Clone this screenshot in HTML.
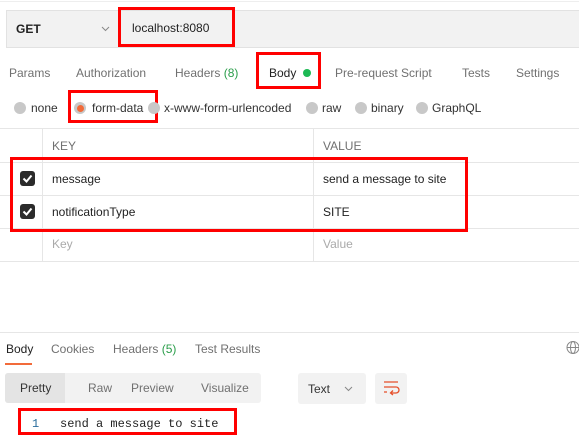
<!DOCTYPE html>
<html><head><style>
body{margin:0;width:579px;height:442px;background:#fff;font-family:"Liberation Sans",sans-serif;font-size:12px;color:#333;position:relative;overflow:hidden}
.a{position:absolute;white-space:nowrap}
.red{position:absolute;border:3px solid #f00;box-sizing:border-box}
.g{color:#707070}
.rad{position:absolute;width:12px;height:12px;border-radius:50%;background:#c8c8c8;top:102px}
.hl{position:absolute;height:1px;background:#e6e6e6;left:0;width:579px}
.vl{position:absolute;width:1px;background:#e6e6e6}
.cb{position:absolute;left:20px;width:15px;height:15px;background:#2b2b2b;border-radius:3px}
</style></head><body>
<div class="hl" style="top:1px;background:#eee"></div>
<div class="a" style="left:6px;top:10px;width:573px;height:38px;background:#f2f2f2;border:1px solid #e2e2e2;border-right:none;box-sizing:border-box"></div>
<div class="a" style="left:16px;top:22px;font-weight:bold;font-size:12px;color:#222">GET</div>
<svg class="a" style="left:101px;top:26px" width="9" height="6"><path d="M1 1l3.5 3.5L8 1" fill="none" stroke="#888"/></svg>
<div class="a" style="left:132px;top:21px;color:#222">localhost:8080</div>
<div class="red" style="left:118px;top:7px;width:117px;height:40px"></div>

<div class="a g" style="left:9px;top:66px">Params</div>
<div class="a g" style="left:76px;top:66px">Authorization</div>
<div class="a g" style="left:175px;top:66px">Headers <span style="color:#2a9d4a">(8)</span></div>
<div class="a" style="left:269px;top:66px;color:#222">Body</div>
<div class="a" style="left:303px;top:69px;width:8px;height:8px;border-radius:50%;background:#1db954"></div>
<div class="a g" style="left:335px;top:66px">Pre-request Script</div>
<div class="a g" style="left:462px;top:66px">Tests</div>
<div class="a g" style="left:516px;top:66px">Settings</div>
<div class="red" style="left:256px;top:52px;width:65px;height:37px"></div>

<div class="rad" style="left:14px"></div><div class="a" style="left:31px;top:101px">none</div>
<div class="rad" style="left:74px"></div><div class="a" style="left:77px;top:105px;width:7px;height:7px;border-radius:50%;background:#f26b3a"></div>
<div class="a" style="left:92px;top:101px">form-data</div>
<div class="red" style="left:68px;top:90px;width:90px;height:33px"></div>
<div class="rad" style="left:148px"></div><div class="a" style="left:164px;top:101px">x-www-form-urlencoded</div>
<div class="rad" style="left:306px"></div><div class="a" style="left:322px;top:101px">raw</div>
<div class="rad" style="left:355px"></div><div class="a" style="left:371px;top:101px">binary</div>
<div class="rad" style="left:416px"></div><div class="a" style="left:432px;top:101px">GraphQL</div>
<div class="hl" style="top:128px"></div>

<div class="vl" style="left:42px;top:129px;height:133px"></div>
<div class="vl" style="left:313px;top:129px;height:133px"></div>
<div class="a g" style="left:52px;top:139px">KEY</div>
<div class="a g" style="left:323px;top:139px">VALUE</div>
<div class="hl" style="top:162px"></div>
<div class="hl" style="top:195px"></div>
<div class="hl" style="top:228px"></div>
<div class="hl" style="top:261px"></div>
<div class="cb" style="top:171px"><svg width="15" height="15"><path d="M3.5 7.5l3 3 5-6" fill="none" stroke="#fff" stroke-width="2"/></svg></div>
<div class="a" style="left:52px;top:172px;color:#222">message</div>
<div class="a" style="left:323px;top:172px;color:#222">send a message to site</div>
<div class="cb" style="top:204px"><svg width="15" height="15"><path d="M3.5 7.5l3 3 5-6" fill="none" stroke="#fff" stroke-width="2"/></svg></div>
<div class="a" style="left:52px;top:205px;color:#222">notificationType</div>
<div class="a" style="left:323px;top:205px;color:#222">SITE</div>
<div class="a" style="left:52px;top:237px;color:#aaa">Key</div>
<div class="a" style="left:323px;top:237px;color:#aaa">Value</div>
<div class="red" style="left:10px;top:157px;width:458px;height:75px"></div>

<div class="hl" style="top:332px"></div>
<div class="a" style="left:6px;top:342px;color:#222">Body</div>
<div class="a g" style="left:51px;top:342px">Cookies</div>
<div class="a g" style="left:113px;top:342px">Headers <span style="color:#2a9d4a">(5)</span></div>
<div class="a g" style="left:195px;top:342px">Test Results</div>
<div class="a" style="left:5px;top:363px;width:27px;height:2px;background:#f26b3a"></div>
<svg class="a" style="left:566px;top:340px" width="14" height="15"><circle cx="7" cy="7.5" r="6" fill="none" stroke="#888"/><ellipse cx="7" cy="7.5" rx="2.5" ry="6" fill="none" stroke="#888"/><path d="M1 7.5H13" stroke="#888"/></svg>

<div class="a" style="left:5px;top:373px;width:256px;height:30px;background:#f2f2f2;border-radius:3px"></div>
<div class="a" style="left:5px;top:373px;width:60px;height:30px;background:#e4e4e4;border-radius:3px 0 0 3px"></div>
<div class="a" style="left:20px;top:381px;color:#333">Pretty</div>
<div class="a g" style="left:88px;top:381px">Raw</div>
<div class="a g" style="left:131px;top:381px">Preview</div>
<div class="a g" style="left:201px;top:381px">Visualize</div>
<div class="a" style="left:298px;top:373px;width:68px;height:31px;background:#f2f2f2;border-radius:3px"></div>
<div class="a" style="left:308px;top:382px;font-size:12px">Text</div>
<svg class="a" style="left:344px;top:386px" width="9" height="6"><path d="M1 1l3.5 3.5L8 1" fill="none" stroke="#888"/></svg>
<div class="a" style="left:375px;top:373px;width:32px;height:31px;background:#f2f2f2;border-radius:3px"></div>
<svg class="a" style="left:382px;top:380px" width="18" height="16" viewBox="0 0 18 16"><path d="M2 2H16M2 7H14a3 3 0 0 1 0 6H9M11 10.5l-2.5 2.5 2.5 2M2 12H5" fill="none" stroke="#e6502b" stroke-width="1.3"/></svg>
<div class="a" style="left:32px;top:417px;font-family:'Liberation Mono',monospace;font-size:12px;color:#2a6d9c">1</div>
<div class="a" style="left:60px;top:417px;font-family:'Liberation Mono',monospace;font-size:12px;color:#222">send a message to site</div>
<div class="red" style="left:18px;top:408px;width:219px;height:27px"></div>
</body></html>
